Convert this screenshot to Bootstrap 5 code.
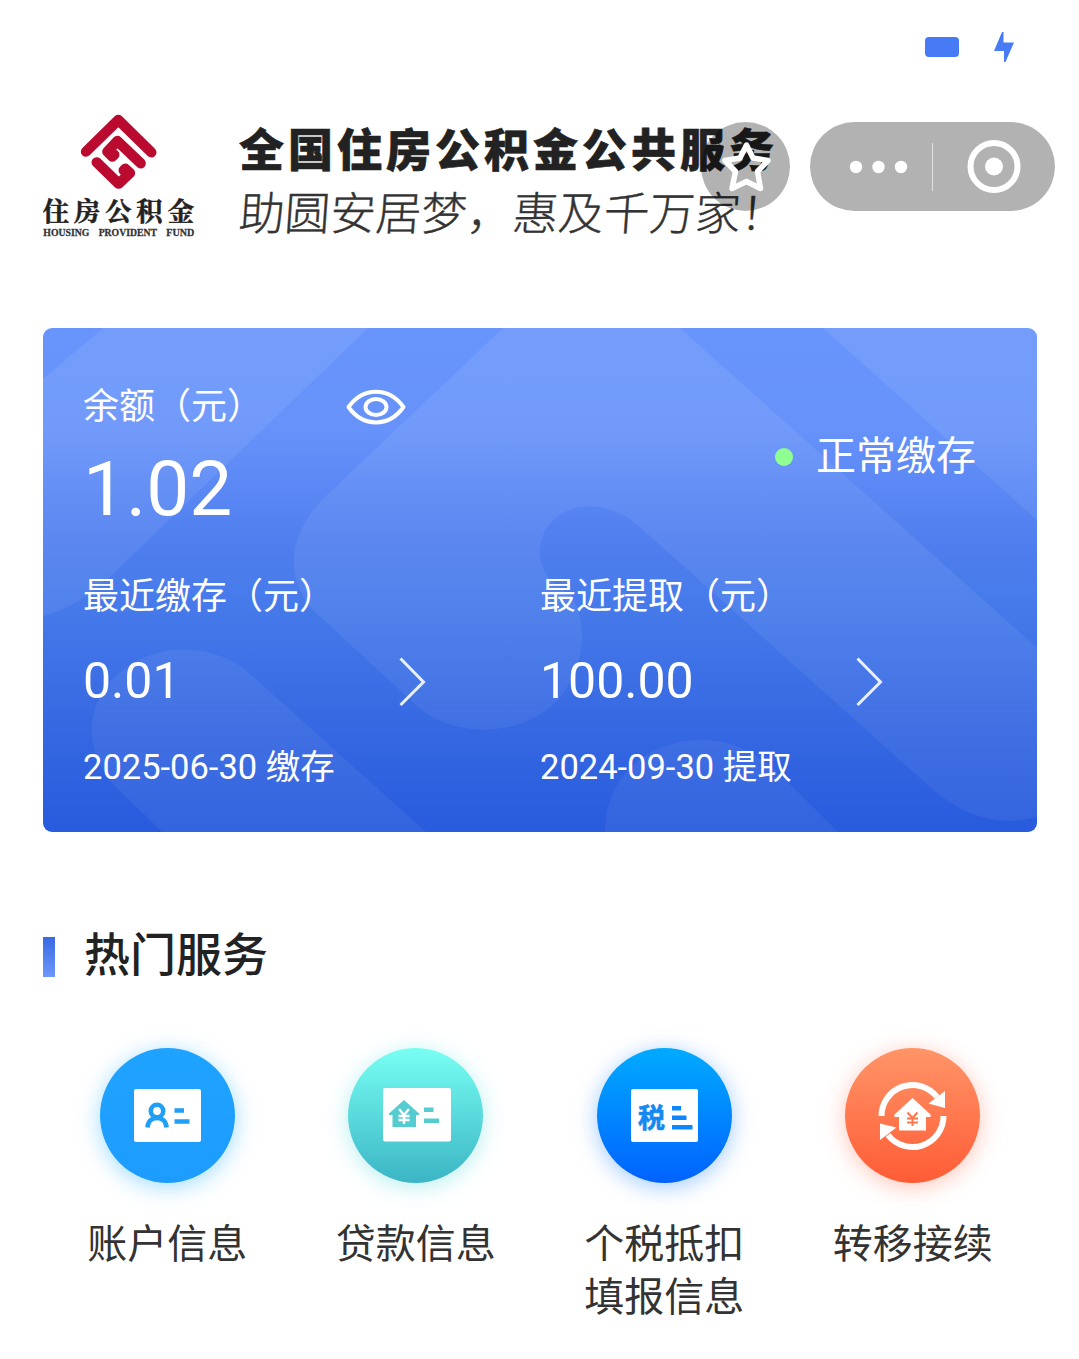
<!DOCTYPE html>
<html lang="zh-CN">
<head>
    <meta charset="UTF-8">
    <meta name="viewport" content="width=device-width, initial-scale=1.0">
    <title>全国住房公积金公共服务</title>
    <link rel="stylesheet" href="https://cdn.jsdelivr.net/npm/bootstrap@5.3.0/dist/css/bootstrap.min.css">
    <style>
        body { font-family: Roboto, "Noto Sans CJK SC", sans-serif; color: #222; background: #fff; overflow-x: hidden; }
        svg { display: block; flex-shrink: 0; }
        .page { padding: 0 42px 0 43px; }

        .status-bar { height: 94px; padding: 32px 65px 0 0; gap: 35px; }
        .battery { width: 34px; height: 20px; border-radius: 4px; background: #477bf5; margin-top: 5px; }

        .brand { height: 234px; padding-top: 20px; gap: 43px; }
        .brand-title { font-size: 45px; line-height: 60px; font-weight: 900; letter-spacing: 4px; -webkit-text-stroke: .6px #222; margin-top: 8px; }
        .brand-slogan { font-size: 45.6px; line-height: 60px; font-weight: 300; color: #333; -webkit-text-stroke: .4px #333; transform: skewX(-4deg); margin-top: 3px; }

        .mini-tools { top: 122px; right: 24px; gap: 20px; }
        .tool-bg { background: rgba(0, 0, 0, .3); height: 89px; }
        .tool-star { width: 89px; }
        .tool-capsule { width: 245px; }

        .account { height: 504px; border-radius: 9px; padding: 54px 40px 0; background: linear-gradient(#6895fb 0%, #6692fa 20%, #4f7eee 43%, #467aea 55%, #386ae3 76%, #285bdd 100%); }
        .text-label { font-size: 36px; line-height: 50px; }
        .text-balance { font-size: 76.5px; line-height: 90px; margin-top: 12px; }
        .text-amount { font-size: 50px; line-height: 60px; }
        .text-date { font-size: 34.5px; line-height: 50px; margin-top: 31px; }
        .label-row { padding-right: 134px; }
        .amount-row { padding-right: 114px; margin-top: 29px; }
        .recent { margin-top: 38px; }
        .pay-state { font-size: 40px; line-height: 50px; gap: 23px; padding-right: 21px; margin-top: 50px; }
        .state-dot { width: 18px; height: 18px; background: #8eff90; }

        .section-title { margin-top: 95px; height: 60px; gap: 29px; font-size: 46px; line-height: 60px; }
        .section-text { margin-bottom: 4px; }
        .section-bar { width: 12px; height: 40px; background: linear-gradient(#3a69e2, #6d97fc); }

        .services { margin-top: 61px; }
        .service-icon { width: 135px; height: 135px; }
        .service-name { font-size: 40px; line-height: 53px; color: #333; margin-top: 35px; }
        .bg-account { background: linear-gradient(#1fa3ff, #1d9cff); box-shadow: 0 4px 22px rgba(30, 175, 255, .42); }
        .bg-loan { background: linear-gradient(#78fff3, #3bb5c5); box-shadow: 0 4px 22px rgba(80, 215, 220, .4); }
        .bg-tax { background: linear-gradient(#00abff, #0062ff); box-shadow: 0 4px 22px rgba(20, 125, 255, .4); }
        .bg-transfer { background: linear-gradient(#ff9568, #ff5c36); box-shadow: 0 4px 22px rgba(255, 105, 70, .38); }
    </style>
</head>
<body>
    <!-- Barre d'état -->
    <div class="status-bar d-flex justify-content-end align-items-start">
        <div class="battery"></div>
        <svg width="20" height="30" viewBox="0 0 20 30" fill="#477bf5"><path d="M8 0h1.500v10.500H20L11.500 30H10V19H0z"/></svg>
    </div>

    <header class="page brand d-flex align-items-start">
        <svg width="153" height="126" viewBox="39 42 459 378">
            <g fill="none" stroke="#ba0a2f" stroke-width="31" stroke-linecap="round" stroke-linejoin="round">
                <path d="M168 155 265 60 364 157"/>
                <path d="M332 190 262 123 232 155 247 170 253 164"/>
                <path d="M200 187 266 251 300 219 286 206 281 211"/>
            </g>
            <g fill="#222" stroke="#222" stroke-width="1.500" font-family="'Noto Serif CJK SC', 'Noto Sans CJK SC', sans-serif" font-weight="700" font-size="79">
                <text x="38 132 226 319 413" y="363">住房公积金</text>
            </g>
            <g fill="#333" stroke="#333" stroke-width=".8" font-family="'Liberation Serif', serif" font-weight="700" font-size="29">
                <text x="40" y="407" textLength="138" lengthAdjust="spacingAndGlyphs">HOUSING</text>
                <text x="206" y="407" textLength="175" lengthAdjust="spacingAndGlyphs">PROVIDENT</text>
                <text x="409" y="407" textLength="84" lengthAdjust="spacingAndGlyphs">FUND</text>
            </g>
        </svg>
        <div class="text-nowrap">
            <div class="brand-title">全国住房公积金公共服务</div>
            <div class="brand-slogan">助圆安居梦，惠及千万家！</div>
        </div>
    </header>

    <!-- Boutons flottants au-dessus de l'en-tête -->
    <div class="mini-tools position-absolute d-flex">
        <div class="tool-bg tool-star rounded-circle d-flex align-items-center justify-content-center">
            <svg width="50" height="52" viewBox="0 0 50 52" fill="none" stroke="#fff" stroke-width="5.500" stroke-linejoin="round"><path d="M25.500 4 32 17 47 19.500 36.500 30.500 39.500 47.500 25.500 40.500 11 47.500 14.500 30.500 4 19.500 19 17z"/></svg>
        </div>
        <div class="tool-bg tool-capsule rounded-pill">
            <svg width="245" height="89" viewBox="0 0 245 89" fill="#fff">
                <circle cx="46" cy="45" r="6.200"/><circle cx="68.500" cy="45" r="6.200"/><circle cx="91" cy="45" r="6.200"/>
                <path d="M122 21h1v48h-1z" opacity=".6"/>
                <circle cx="184" cy="44.500" r="23.500" fill="none" stroke="#fff" stroke-width="6"/>
                <circle cx="184" cy="44.500" r="9"/>
            </svg>
        </div>
    </div>

    <main class="page">
        <section class="account position-relative overflow-hidden text-white">
            <!-- Formes claires du fond -->
            <svg class="position-absolute top-0 start-0" width="994" height="504" viewBox="43 328 994 504" fill="url(#shapeFill)">
                <defs>
                    <linearGradient id="shapeFill" gradientUnits="userSpaceOnUse" x1="0" y1="328" x2="0" y2="832">
                        <stop offset="0" stop-color="#fff" stop-opacity=".08"/>
                        <stop offset="1" stop-color="#fff" stop-opacity=".05"/>
                    </linearGradient>
                </defs>
                <path d="M103 328H368L120 567Q80 607 43 616V379Z"/>
                <path d="M503 328H680L1037 648V817Q980 832 930 787L640 527C600 490 540 505 540 553C541 582 565 588 574 600C588 630 584 668 558 700C515 742 450 735 417 706L313 610C284 575 287 535 327 495Z"/>
                <path d="M823 328H1037V520Z"/>
                <path d="M162 832 113 784C85 750 85 710 112 680C150 640 213 641 250 674L426 832Z"/>
                <path d="M605 832C605 745 710 710 775 770L838 832Z"/>
            </svg>

            <div class="row g-0 position-relative">
                <div class="col-6">
                    <div class="label-row d-flex justify-content-between align-items-center text-label">
                        <span>余额（元）</span>
                        <svg width="60" height="36" viewBox="0 0 60 36" fill="none" stroke="#fff" stroke-width="4"><path d="M2.500 18C17-2.500 43-2.500 57.500 18C43 38.500 17 38.500 2.500 18Z" stroke-linejoin="round"/><ellipse cx="30" cy="18" rx="10.500" ry="8"/></svg>
                    </div>
                    <div class="text-balance">1.02</div>
                </div>
                <div class="col-6">
                    <div class="pay-state d-flex justify-content-end align-items-center">
                        <span class="state-dot rounded-circle"></span>
                        <span>正常缴存</span>
                    </div>
                </div>
            </div>

            <div class="row g-0 recent position-relative">
                <div class="col-6">
                    <div class="text-label">最近缴存（元）</div>
                    <div class="amount-row text-amount d-flex justify-content-between align-items-center">
                        <span>0.01</span>
                        <svg width="27" height="50" viewBox="0 0 27 50" fill="none" stroke="#e8f0ff" stroke-width="3"><path d="M1.500 2.500 24.500 26 1.500 49"/></svg>
                    </div>
                    <div class="text-date">2025-06-30 缴存</div>
                </div>
                <div class="col-6">
                    <div class="text-label">最近提取（元）</div>
                    <div class="amount-row text-amount d-flex justify-content-between align-items-center">
                        <span>100.00</span>
                        <svg width="27" height="50" viewBox="0 0 27 50" fill="none" stroke="#e8f0ff" stroke-width="3"><path d="M1.500 2.500 24.500 26 1.500 49"/></svg>
                    </div>
                    <div class="text-date">2024-09-30 提取</div>
                </div>
            </div>
        </section>

        <h2 class="section-title d-flex align-items-center mb-0">
            <span class="section-bar"></span>
            <span class="section-text">热门服务</span>
        </h2>

        <section class="services row g-0 text-center">
            <div class="col-3">
                <div class="service-icon bg-account rounded-circle mx-auto">
                    <svg width="135" height="135" viewBox="0 0 135 135">
                        <rect x="34" y="41" width="67" height="53" rx="2" fill="#fff"/>
                        <g fill="none" stroke="#1f9ff5" stroke-width="4.600">
                            <circle cx="57" cy="63" r="6.200"/>
                            <path d="M47.500 79.500C48 73 52 70 57 70S66 73 66.500 79.500"/>
                            <path d="M74.500 62.500h9.500M74.500 73.500h15"/>
                        </g>
                    </svg>
                </div>
                <div class="service-name">账户信息</div>
            </div>
            <div class="col-3">
                <div class="service-icon bg-loan rounded-circle mx-auto">
                    <svg width="135" height="135" viewBox="0 0 135 135">
                        <rect x="35" y="40" width="68" height="53.500" rx="2" fill="#fff"/>
                        <g fill="#55cdd0">
                            <path d="M56 52 71 65.500V67H68V79H44.500V67H41V65.500Z"/>
                            <path d="M76 59.500h9.500v4.500H76zM76 70.500h15v4.500H76z"/>
                        </g>
                        <path d="M51 61 56 67 61 61M50.500 68h11M50.500 72h11M56 67v9" fill="none" stroke="#fff" stroke-width="2.400"/>
                    </svg>
                </div>
                <div class="service-name">贷款信息</div>
            </div>
            <div class="col-3">
                <div class="service-icon bg-tax rounded-circle mx-auto">
                    <svg width="135" height="135" viewBox="0 0 135 135">
                        <rect x="34" y="41" width="67" height="53" rx="2" fill="#fff"/>
                        <text x="41" y="80" font-size="27" font-weight="700" fill="#1389f2" stroke="#1389f2" stroke-width=".6">税</text>
                        <path d="M75 58h9v4.500h-9zM75 67.500h14.500v4.500H75zM75 77h20.500v4.500H75z" fill="#0c86fa"/>
                    </svg>
                </div>
                <div class="service-name">个税抵扣<br>填报信息</div>
            </div>
            <div class="col-3">
                <div class="service-icon bg-transfer rounded-circle mx-auto">
                    <svg width="135" height="135" viewBox="0 0 135 135">
                        <g fill="none" stroke="#fff" stroke-width="6">
                            <path d="M36.500 68A31 31 0 0 1 92 49"/>
                            <path d="M98.500 68A31 31 0 0 1 43 87"/>
                        </g>
                        <g fill="#fff">
                            <path d="M100 43V60L83.500 55.500Z"/>
                            <path d="M35 92V75.500L51.500 79.500Z"/>
                            <path d="M67.500 50 85.500 66.500V69H81V82.500H54V69H49.500V66.500Z"/>
                        </g>
                        <path d="M62.500 64.500 67.500 70 72.500 64.500M62 70.500h11M62 74.500h11M67.500 70v8" fill="none" stroke="#ff764c" stroke-width="2"/>
                    </svg>
                </div>
                <div class="service-name">转移接续</div>
            </div>
        </section>
    </main>

    <script src="https://cdn.jsdelivr.net/npm/bootstrap@5.3.0/dist/js/bootstrap.bundle.min.js"></script>
</body>
</html>
